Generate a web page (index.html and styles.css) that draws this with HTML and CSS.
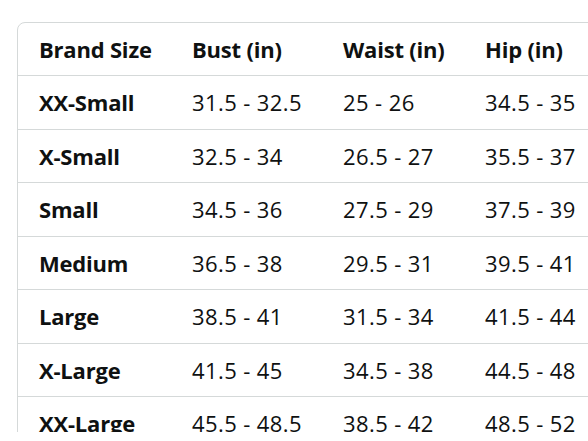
FILE: index.html
```html
<!DOCTYPE html>
<html lang="en">
<head>
<meta charset="utf-8">
<title>Size chart</title>
<link rel="stylesheet" href="styles.css">
</head>
<body>
<div class="viewport">
  <div class="chart">
    <table class="size-table">
      <colgroup>
        <col class="c1"><col class="c2"><col class="c3"><col class="c4">
      </colgroup>
      <thead>
        <tr><th>Brand Size</th><th>Bust (in)</th><th>Waist (in)</th><th>Hip (in)</th></tr>
      </thead>
      <tbody>
        <tr><th>XX-Small</th><td>31.5 - 32.5</td><td>25 - 26</td><td>34.5 - 35</td></tr>
        <tr><th>X-Small</th><td>32.5 - 34</td><td>26.5 - 27</td><td>35.5 - 37</td></tr>
        <tr><th>Small</th><td>34.5 - 36</td><td>27.5 - 29</td><td>37.5 - 39</td></tr>
        <tr><th>Medium</th><td>36.5 - 38</td><td>29.5 - 31</td><td>39.5 - 41</td></tr>
        <tr><th>Large</th><td>38.5 - 41</td><td>31.5 - 34</td><td>41.5 - 44</td></tr>
        <tr><th>X-Large</th><td>41.5 - 45</td><td>34.5 - 38</td><td>44.5 - 48</td></tr>
        <tr><th>XX-Large</th><td>45.5 - 48.5</td><td>38.5 - 42</td><td>48.5 - 52</td></tr>
      </tbody>
    </table>
  </div>
</div>
</body>
</html>
```

FILE: styles.css
```css
html, body {
  margin: 0;
  padding: 0;
  background: #ffffff;
}
.viewport {
  width: 588px;
  height: 432px;
  overflow: hidden;
  padding: 22px 0 0 17px;
  box-sizing: border-box;
}
.chart {
  width: 700px;
  border: 1px solid #d5d9d9;
  border-radius: 8px;
  overflow: hidden;
}
.size-table {
  border-collapse: collapse;
  table-layout: fixed;
  width: 700px;
  font-family: "Open Sans", "Noto Sans", sans-serif;
  font-size: 22px;
  color: #0f1111;
}
.c1 { width: 153px; }
.c2 { width: 151px; }
.c3 { width: 142px; }
.c4 { width: 254px; }
.size-table th,
.size-table td {
  height: 52.5px;
  padding: 0 0 0 21px;
  text-align: left;
  vertical-align: middle;
  white-space: nowrap;
  border-bottom: 1px solid #d5d9d9;
}
.size-table thead th {
  height: 52px;
}
.size-table th {
  font-weight: 700;
  letter-spacing: -0.2px;
}
.size-table td {
  font-weight: 400;
  letter-spacing: 0.4px;
}
.size-table tbody tr:last-child th,
.size-table tbody tr:last-child td {
  border-bottom: none;
}
```
